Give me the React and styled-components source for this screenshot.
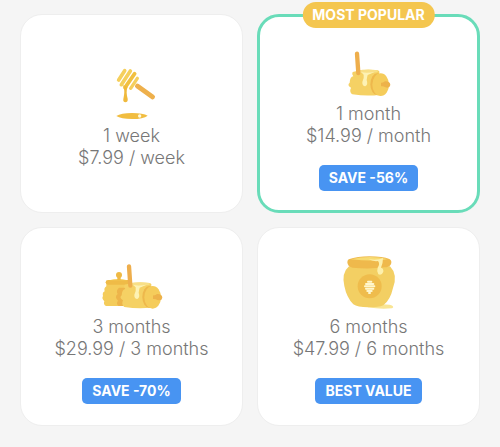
import React from "react";
import styled, { createGlobalStyle } from "styled-components";

const GlobalStyle = createGlobalStyle`
  * {
    box-sizing: border-box;
  }
  body {
    margin: 0;
    background: #f5f5f5;
    font-family: "Inter", "Liberation Sans", sans-serif;
  }
`;

const Dipper = () => (
  <Picture viewBox="-9 9 240 198" aria-hidden="true">
    <g fill="none" strokeLinecap="round">
      <path d="M127 90L173 123" stroke="#eeb04c" strokeWidth="14" />
      <path d="M71 72L89 44" stroke="#f5cf5c" strokeWidth="11" />
      <path d="M79 86L106 45" stroke="#f5cf5c" strokeWidth="11" />
      <path d="M90 95L119 53" stroke="#f1c040" strokeWidth="11" />
      <path d="M107 97L127 67" stroke="#f5cf5c" strokeWidth="10" />
    </g>
    <path
      d="M84 88L98 92C93 104 95 116 98 128C101 142 82 142 85 129C88 115 90 104 84 88Z"
      fill="#efb93c"
    />
    <path d="M64 180Q78 171 111 171Q145 171 158 179Q145 189 111 189Q78 189 64 180Z" fill="#f1bd40" />
    <circle cx="134" cy="180" r="5" fill="#fff9dd" />
  </Picture>
);

// The open pot lying next to its lid, shared by the one and three month plans
const OpenPot = () => (
  <g>
    <path
      d="M66 93Q98 83 141 88Q149 91 145 98Q158 128 147 161Q112 167 65 160Q55 153 61 140Q48 133 57 125Q58 107 68 106Q62 99 66 93Z"
      fill="#f5d164"
    />
    <path d="M78 89Q110 83 141 88Q144 92 138 94Q108 98 82 95Z" fill="#f8df86" />
    <path
      d="M92 94Q109 97 132 93Q118 99 111 102Q109 109 108 117Q113 131 104 136Q94 135 95 123Q101 112 99 101Z"
      fill="#fdf2b4"
    />
    <path d="M79 38L83 96" stroke="#eeae4c" strokeWidth="13" strokeLinecap="round" />
    <ellipse cx="140" cy="130" rx="21" ry="33" fill="#eeb84c" />
    <ellipse cx="150" cy="131" rx="25" ry="34" fill="#f5cc5b" />
    <path d="M151 125Q158 126 163 121Q178 120 179 132Q177 143 164 139Q158 135 151 136Z" fill="#edb24a" />
  </g>
);

const SmallPot = () => (
  <Picture viewBox="-5 -12 240 198" aria-hidden="true">
    <OpenPot />
  </Picture>
);

const TwoPots = () => (
  <Picture viewBox="6 -15 240 198" aria-hidden="true">
    <path
      d="M49 84H119V153H48Q39 149 43 139Q34 130 39 123Q36 113 44 109Q41 99 49 94Z"
      fill="#f4cc5b"
    />
    <path d="M87 98Q77 107 83 117Q72 126 84 137Q77 146 86 153H106V98Z" fill="#edb44a" />
    <rect x="47" y="75" width="75" height="14" rx="7" fill="#efbb47" />
    <path d="M58 76Q84 68 112 76Z" fill="#f5ce5a" />
    <circle cx="87" cy="60" r="9" fill="#efb944" />
    <path d="M82 66H92V75H82Z" fill="#efb944" />
    <g transform="translate(38 -4)">
      <OpenPot />
    </g>
  </Picture>
);

const BigPot = () => (
  <Picture viewBox="-5 15 240 198" aria-hidden="true">
    <path d="M112 183Q140 175 177 179Q194 184 184 190Q150 194 112 187Z" fill="#f9e593" />
    <path
      d="M55 64H178Q202 89 187 129Q179 165 158 181Q145 187 112 187Q80 187 68 178Q48 158 41 123Q32 84 55 64Z"
      fill="#f3cf63"
    />
    <path d="M54 43Q80 34 116 34Q157 34 176 42Q186 48 180 59Q174 67 161 67Q116 73 66 68Q51 66 50 52Q50 46 54 43Z" fill="#efb94c" />
    <path d="M61 43Q116 29 171 42Q132 51 61 43Z" fill="#f7db72" />
    <path
      d="M113 42Q139 47 157 39Q157 56 151 68Q159 70 158 80Q153 93 143 88Q137 79 141 68Q149 57 142 48Q127 50 113 42Z"
      fill="#fdf0ad"
    />
    <circle cx="117" cy="124" r="36" fill="#efbc4c" />
    <g stroke="#fff7cf" strokeWidth="6" strokeLinecap="round">
      <path d="M112 110H122" />
      <path d="M106 117H128" />
      <path d="M103 124H131" />
      <path d="M106 131H128" />
      <path d="M110 138H123" />
      <path d="M115 144H118" />
    </g>
  </Picture>
);

const plans = [
  { id: "week", icon: Dipper, title: "1 week", price: "$7.99 / week" },
  {
    id: "month",
    icon: SmallPot,
    title: "1 month",
    price: "$14.99 / month",
    offer: "SAVE -56%",
    ribbon: "MOST POPULAR",
    selected: true,
  },
  {
    id: "quarter",
    icon: TwoPots,
    title: "3 months",
    price: "$29.99 / 3 months",
    offer: "SAVE -70%",
  },
  {
    id: "half",
    icon: BigPot,
    title: "6 months",
    price: "$47.99 / 6 months",
    offer: "BEST VALUE",
  },
];

const App = () => {
  return (
    <>
      <GlobalStyle />
      <Plans>
        {plans.map(plan => {
          const Icon = plan.icon;
          return (
            <Card
              key={plan.id}
              type="button"
              aria-pressed={!!plan.selected}
              $selected={plan.selected}
            >
              {plan.ribbon && <Ribbon>{plan.ribbon}</Ribbon>}
              <Icon />
              <Line>{plan.title}</Line>
              <Line>{plan.price}</Line>
              {plan.offer && <Offer>{plan.offer}</Offer>}
            </Card>
          );
        })}
      </Plans>
    </>
  );
};

export default App;

const Plans = styled.main`
  display: grid;
  grid-template-columns: repeat(2, 1fr);
  grid-auto-rows: 1fr;
  gap: 14px;
  padding: 14px 20px 20px;
`;

const Card = styled.button`
  position: relative;
  display: flex;
  flex-direction: column;
  align-items: center;
  justify-content: center;
  min-height: 199px;
  padding: 16px 8px;
  border: ${props => (props.$selected ? "3px solid #69dcb9" : "1px solid #eeeeee")};
  border-radius: 22px;
  background: #ffffff;
  color: #777777;
  font-family: inherit;
  cursor: pointer;
`;

const Picture = styled.svg`
  width: 80px;
  height: 66px;
`;

const Line = styled.span`
  font-size: 18px;
  font-weight: 300;
  line-height: 22px;
`;

const Offer = styled.span`
  margin-top: 18px;
  padding: 0 10px;
  border-radius: 5px;
  background: #4894f2;
  color: #ffffff;
  font-size: 14px;
  font-weight: 700;
  line-height: 26px;
`;

const Ribbon = styled.span`
  position: absolute;
  top: -15px;
  left: 50%;
  transform: translateX(-50%);
  padding: 0 10px;
  border-radius: 13px;
  background: #f4c64f;
  color: #ffffff;
  font-size: 14px;
  font-weight: 700;
  line-height: 26px;
  white-space: nowrap;
`;
